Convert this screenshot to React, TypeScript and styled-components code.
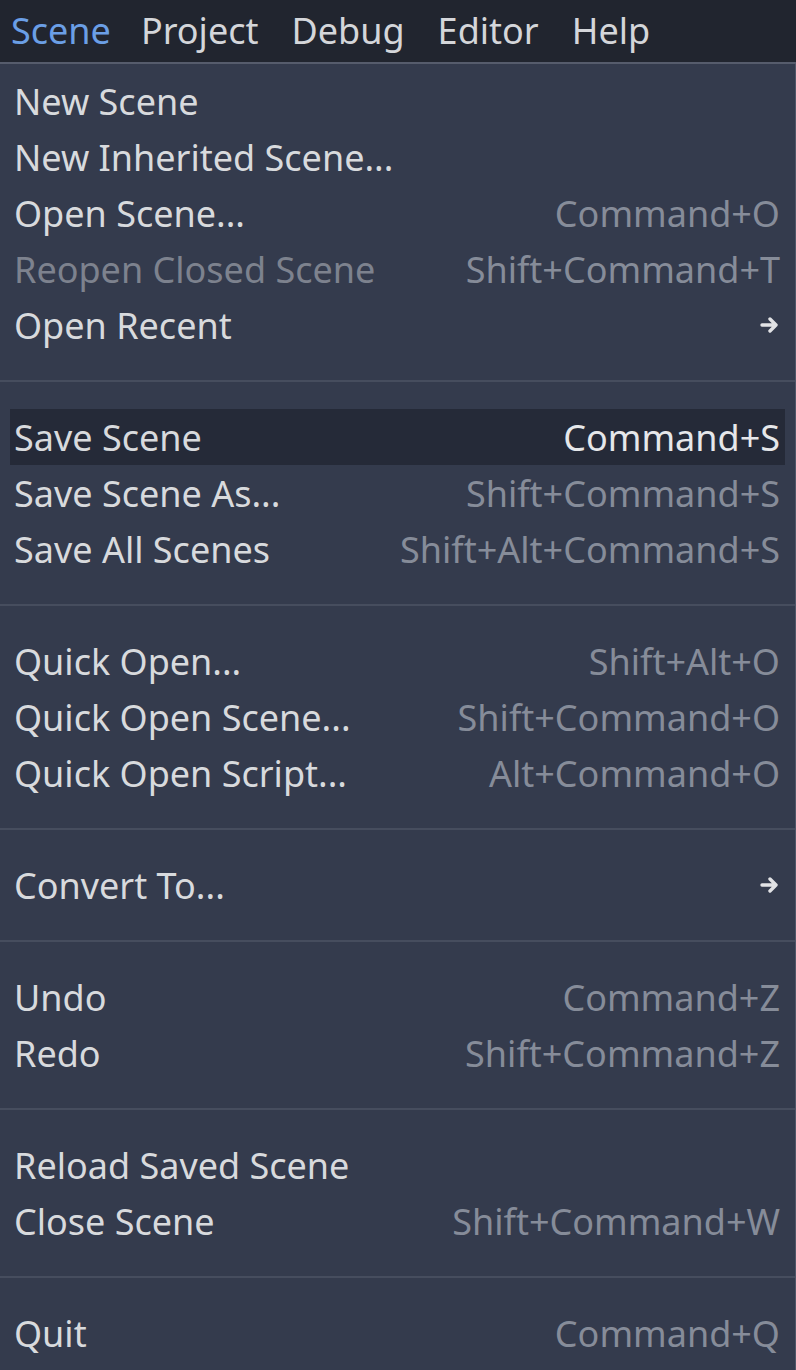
import React from 'react';
import styled, { createGlobalStyle } from 'styled-components';

type Item = {
  label: string;
  shortcut?: string;
  disabled?: boolean;
  active?: boolean;
  submenu?: boolean;
};

const groups: Item[][] = [
  [
    { label: 'New Scene' },
    { label: 'New Inherited Scene...' },
    { label: 'Open Scene...', shortcut: 'Command+O' },
    { label: 'Reopen Closed Scene', shortcut: 'Shift+Command+T', disabled: true },
    { label: 'Open Recent', submenu: true },
  ],
  [
    { label: 'Save Scene', shortcut: 'Command+S', active: true },
    { label: 'Save Scene As...', shortcut: 'Shift+Command+S' },
    { label: 'Save All Scenes', shortcut: 'Shift+Alt+Command+S' },
  ],
  [
    { label: 'Quick Open...', shortcut: 'Shift+Alt+O' },
    { label: 'Quick Open Scene...', shortcut: 'Shift+Command+O' },
    { label: 'Quick Open Script...', shortcut: 'Alt+Command+O' },
  ],
  [{ label: 'Convert To...', submenu: true }],
  [
    { label: 'Undo', shortcut: 'Command+Z' },
    { label: 'Redo', shortcut: 'Shift+Command+Z' },
  ],
  [
    { label: 'Reload Saved Scene' },
    { label: 'Close Scene', shortcut: 'Shift+Command+W' },
  ],
  [{ label: 'Quit', shortcut: 'Command+Q' }],
];

const menus = ['Scene', 'Project', 'Debug', 'Editor', 'Help'];

const GlobalStyle = createGlobalStyle`
  html, body {
    margin: 0;
    padding: 0;
    background: #343b4d;
  }
  body {
    font-family: 'Noto Sans', 'Open Sans', sans-serif;
    -webkit-font-smoothing: antialiased;
  }
`;

const Page = styled.div`
  width: 796px;
  height: 1370px;
  display: flex;
  flex-direction: column;
  overflow: hidden;
`;

const MenuBar = styled.nav`
  height: 64px;
  box-sizing: border-box;
  display: flex;
  align-items: center;
  gap: 11px;
  padding-left: 11px;
  background: #21252f;
  border-bottom: 2px solid #565c6c;
`;

const MenuTitle = styled.span<{ $open?: boolean }>`
  padding-right: 22px;
  font-size: 36px;
  line-height: 62px;
  color: ${p => (p.$open ? '#6b9fe6' : '#d4d6da')};

  &:first-child {
    padding-right: 19px;
  }
`;

const Popup = styled.div`
  flex: 1;
  display: flex;
  flex-direction: column;
  padding: 9px 10px 0 10px;
  background: #343b4d;
  border-right: 1px solid #4f5668;
`;

const Row = styled.div<{ $active?: boolean }>`
  height: 56px;
  display: flex;
  align-items: center;
  justify-content: space-between;
  padding: 0 5px 0 4px;
  background: ${p => (p.$active ? '#252a38' : 'transparent')};
  font-size: 36px;
  white-space: nowrap;
`;

const Label = styled.span<{ $disabled?: boolean }>`
  color: ${p => (p.$disabled ? '#7d828e' : '#d8dadd')};
`;

const Shortcut = styled.span<{ $active?: boolean }>`
  color: ${p => (p.$active ? '#e6e7ea' : '#868c99')};
`;

const Separator = styled.div`
  height: 56px;
  display: flex;
  align-items: center;
  margin: 0 -10px;

  &::after {
    content: '';
    flex: 1;
    height: 2px;
    background: #464d5e;
  }
`;

const Arrow = () => (
  <svg width="20" height="18" viewBox="0 0 20 18" fill="none">
    <path
      d="M2 9h14M10 3l6 6-6 6"
      stroke="#e2e3e6"
      strokeWidth="3.4"
      strokeLinecap="round"
      strokeLinejoin="round"
    />
  </svg>
);

const App = () => {
  return (
    <Page>
      <GlobalStyle />
      <MenuBar>
        {menus.map((m, i) => (
          <MenuTitle key={m} $open={i === 0}>
            {m}
          </MenuTitle>
        ))}
      </MenuBar>
      <Popup>
        {groups.map((group, gi) => (
          <React.Fragment key={gi}>
            {gi > 0 && <Separator />}
            {group.map(item => (
              <Row key={item.label} $active={item.active}>
                <Label $disabled={item.disabled}>{item.label}</Label>
                {item.shortcut && <Shortcut $active={item.active}>{item.shortcut}</Shortcut>}
                {item.submenu && <Arrow />}
              </Row>
            ))}
          </React.Fragment>
        ))}
      </Popup>
    </Page>
  );
};

export default App;
